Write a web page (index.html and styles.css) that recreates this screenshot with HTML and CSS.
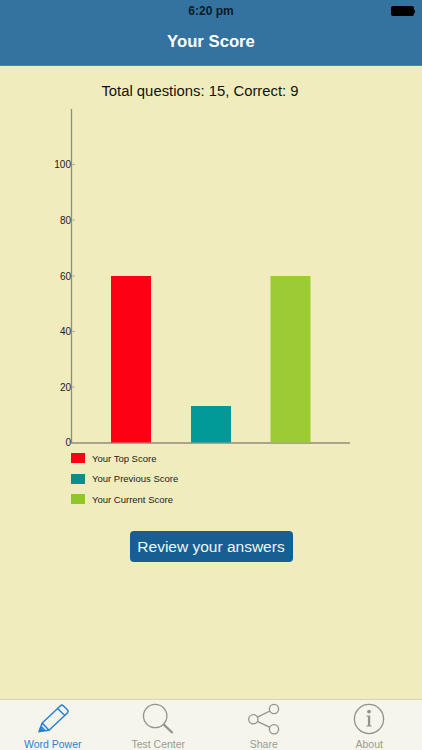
FILE: index.html
```html
<!DOCTYPE html>
<html lang="en">
<head>
<meta charset="utf-8">
<title>Your Score</title>
<link rel="stylesheet" href="styles.css">
</head>
<body>
<div class="app">
  <header class="header">
    <div class="status">
      <span class="time">6:20 pm</span>
      <span class="battery"><span class="battery-body"></span><span class="battery-tip"></span></span>
    </div>
    <h1 class="title">Your Score</h1>
  </header>
  <main class="main">
    <p class="summary">Total questions: 15, Correct: 9</p>
    <svg class="chart" width="422" height="348" viewBox="0 100 422 348" aria-label="Score chart">
      <g class="axis">
        <line x1="71.5" y1="109" x2="71.5" y2="443"/>
        <line x1="71" y1="443" x2="350" y2="443"/>
      </g>
      <g class="tickmarks">
        <line x1="72" y1="164.5" x2="75" y2="164.5"/>
        <line x1="72" y1="220" x2="75" y2="220"/>
        <line x1="72" y1="276" x2="75" y2="276"/>
        <line x1="72" y1="331.5" x2="75" y2="331.5"/>
        <line x1="72" y1="387" x2="75" y2="387"/>
      </g>
      <g class="ticks">
        <text x="71" y="168">100</text>
        <text x="71" y="224">80</text>
        <text x="71" y="280">60</text>
        <text x="71" y="335">40</text>
        <text x="71" y="391">20</text>
        <text x="71" y="446">0</text>
      </g>
      <rect class="bar-top" x="111" y="276" width="40" height="166.5"/>
      <rect class="bar-prev" x="191" y="406" width="40" height="36.5"/>
      <rect class="bar-cur" x="270.5" y="276" width="40" height="166.5"/>
    </svg>
    <ul class="legend">
      <li class="legend-row"><span class="swatch swatch-top"></span>Your Top Score</li>
      <li class="legend-row"><span class="swatch swatch-prev"></span>Your Previous Score</li>
      <li class="legend-row"><span class="swatch swatch-cur"></span>Your Current Score</li>
    </ul>
    <button class="review" type="button">Review your answers</button>
  </main>
  <nav class="tabbar">
    <a class="tab tab-active">
      <svg class="tab-icon" width="40" height="32" viewBox="0 0 40 32">
        <g transform="translate(0 2.5)">
          <path class="stroke-blue" d="M6 28 L9.2 19.5 L27.5 2.2 Q29 1 30.3 2.2 L34.6 6.6 Q35.8 8 34.6 9.3 L16 26.8 Z M9.2 19.5 L16 26.8 M24.6 5 L31.7 12 M8 22.8 L12.6 27.6"/>
          <path class="fill-blue" d="M5.5 29 L7.5 23.4 L11.6 27.6 Z"/>
        </g>
      </svg>
      <span class="tab-label">Word Power</span>
    </a>
    <a class="tab">
      <svg class="tab-icon" width="40" height="32" viewBox="0 0 40 32">
        <circle class="stroke-grey" cx="17.2" cy="15" r="11.7"/>
        <line class="stroke-grey handle" x1="25.6" y1="23.4" x2="34.6" y2="32"/>
      </svg>
      <span class="tab-label">Test Center</span>
    </a>
    <a class="tab">
      <svg class="tab-icon" width="40" height="32" viewBox="0 0 40 32">
        <circle class="stroke-grey" cx="30" cy="8" r="4.6"/>
        <circle class="stroke-grey" cx="9.3" cy="18.3" r="4.6"/>
        <circle class="stroke-grey" cx="30" cy="28.3" r="4.6"/>
        <line class="stroke-grey" x1="13.4" y1="16.2" x2="25.9" y2="10"/>
        <line class="stroke-grey" x1="13.4" y1="20.3" x2="25.9" y2="26.3"/>
      </svg>
      <span class="tab-label">Share</span>
    </a>
    <a class="tab">
      <svg class="tab-icon" width="40" height="32" viewBox="0 0 40 32">
        <circle class="stroke-grey" cx="20" cy="18" r="14.6"/>
        <circle class="fill-grey" cx="20" cy="10.6" r="1.9"/>
        <path class="fill-grey" d="M17.3 14.4 H21.2 V24.2 L22.8 24.7 V25.6 H17.3 V24.7 L18.9 24.2 V15.7 L17.3 15.3 Z"/>
      </svg>
      <span class="tab-label">About</span>
    </a>
  </nav>
</div>
</body>
</html>
```
FILE: styles.css
```css
* { box-sizing: border-box; }
html, body { margin: 0; padding: 0; }
body { font-family: "Liberation Sans", Arial, sans-serif; }
.app {
  width: 422px;
  height: 750px;
  display: flex;
  flex-direction: column;
  background: #f1ecbd;
  overflow: hidden;
}
.header {
  height: 66px;
  flex: none;
  background: #34729f;
  padding: 0 7px 0 0;
  border-bottom: 1px solid #4f86a6;
}
.status {
  height: 22px;
  display: flex;
  align-items: center;
  justify-content: center;
  position: relative;
}
.time { font-size: 12px; font-weight: 700; color: #0a1a2a; margin-left: 7px; }
.battery { position: absolute; right: 0; top: 6px; display: flex; align-items: center; }
.battery-body { width: 23px; height: 10px; background: #000; border-radius: 2px; }
.battery-tip { width: 1.5px; height: 3px; background: #000; }
.title {
  margin: 0;
  padding: 9px 0 0 7px;
  text-align: center;
  font-size: 16.7px;
  line-height: 22px;
  font-weight: 700;
  color: #fff;
}
.main { flex: 1; display: flex; flex-direction: column; align-items: flex-start; min-height: 0; }
.summary {
  width: 100%;
  margin: 0;
  padding: 16px 22px 0 0;
  height: 34px;
  text-align: center;
  font-size: 14.85px;
  line-height: 18px;
  color: #111;
}
.chart { display: block; flex: none; }
.axis line { stroke: #8f8d7c; stroke-width: 1.3; }
.tickmarks line { stroke: #b5b39c; stroke-width: 1; }
.ticks text { font-size: 10px; text-anchor: end; fill: #222; }
.bar-top { fill: #fe0014; }
.bar-prev { fill: #029a98; }
.bar-cur { fill: #9dcb33; }
.legend { list-style: none; margin: 5px 0 0; padding: 0 0 0 71px; }
.legend-row {
  display: flex;
  align-items: center;
  height: 10px;
  margin-bottom: 10.5px;
  font-size: 9.5px;
  color: #222;
}
.swatch { width: 13.5px; height: 10px; margin-right: 7.5px; flex: none; }
.swatch-top { background: #fe0014; }
.swatch-prev { background: #0f8d8d; }
.swatch-cur { background: #8fc62c; }
.review {
  align-self: center;
  margin: 16.5px 0 0 0;
  width: 163px;
  height: 31px;
  padding: 0;
  border: 0;
  border-radius: 4px;
  background: #165f93;
  color: #f2f6f6;
  font-family: inherit;
  font-size: 15.5px;
}
.tabbar {
  flex: none;
  height: 51px;
  display: flex;
  background: #f6f5ec;
  border-top: 1px solid #d8d6b4;
}
.tab {
  flex: 1;
  display: flex;
  flex-direction: column;
  align-items: center;
  color: #9a9a94;
}
.tab-active { color: #2a7fd6; }
.tab-icon { display: block; margin-top: 1px; overflow: visible; }
.tab-label { font-size: 10.5px; line-height: 12px; margin-top: 5px; }
.stroke-blue { fill: none; stroke: #2a7fd6; stroke-width: 1.5; stroke-linejoin: round; }
.fill-blue { fill: #2a7fd6; }
.stroke-grey { fill: none; stroke: #93938b; stroke-width: 1.3; }
.handle { stroke-width: 2.2; }
.fill-grey { fill: #93938b; }
```
